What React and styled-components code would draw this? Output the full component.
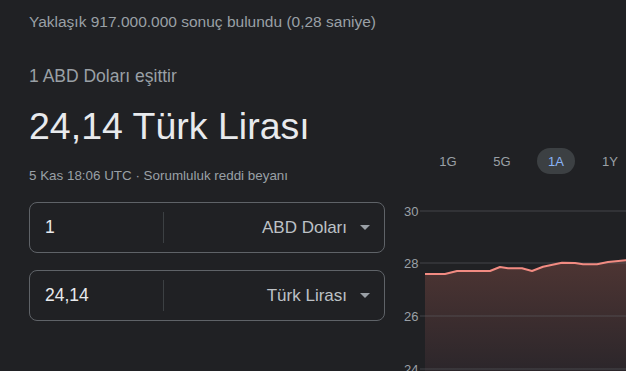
import React from "react";
import styled, { createGlobalStyle } from "styled-components";

const GlobalStyle = createGlobalStyle`
  html, body {
    margin: 0;
    padding: 0;
    background: #202124;
    overflow: hidden;
  }
  body {
    font-family: "Liberation Sans", Arial, sans-serif;
  }
`;

const Page = styled.div`
  width: 626px;
  height: 371px;
  padding-left: 29px;
  box-sizing: border-box;
  overflow: hidden;
`;

const Stats = styled.div`
  font-size: 15.5px;
  line-height: 20px;
  color: #9aa0a6;
  padding-top: 12px;
  white-space: nowrap;
`;

const Lead = styled.div`
  margin-top: 33px;
  font-size: 17.5px;
  line-height: 22px;
  color: #9aa0a6;
`;

const Headline = styled.div`
  margin-top: 17px;
  font-size: 37.5px;
  line-height: 44px;
  color: #e8eaed;
  white-space: nowrap;
`;

const Row = styled.div`
  display: flex;
`;

const LeftCol = styled.div`
  width: 356px;
  flex-shrink: 0;
`;

const Meta = styled.div`
  margin-top: 19px;
  font-size: 13.4px;
  line-height: 18px;
  color: #9aa0a6;
  white-space: nowrap;
`;

const Converter = styled.div`
  margin-top: 17px;
  display: flex;
  flex-direction: column;
  gap: 17px;
`;

const Field = styled.div`
  height: 51px;
  border: 1px solid #5f6368;
  border-radius: 8px;
  box-sizing: border-box;
  display: flex;
  align-items: center;
`;

const Amount = styled.div`
  width: 134px;
  padding-left: 15px;
  box-sizing: border-box;
  font-size: 17.5px;
  color: #e8eaed;
  align-self: stretch;
  display: flex;
  align-items: center;
  border-right: 1px solid #3c4043;
  margin: 9px 0;
`;

const Currency = styled.div`
  flex: 1;
  display: flex;
  align-items: center;
  justify-content: flex-end;
  gap: 13px;
  padding-right: 14px;
  font-size: 17px;
  color: #bdc1c6;
  white-space: nowrap;
`;

const Caret = styled.span`
  width: 0;
  height: 0;
  border-left: 5px solid transparent;
  border-right: 5px solid transparent;
  border-top: 5px solid #9aa0a6;
`;

const RightCol = styled.div`
  margin-left: 10px;
  flex-shrink: 0;
  width: 260px;
`;

const Tabs = styled.div`
  display: flex;
  gap: 16px;
  padding-left: 34px;
`;

const Tab = styled.div`
  width: 38px;
  height: 26px;
  border-radius: 13px;
  display: flex;
  align-items: center;
  justify-content: center;
  font-size: 13px;
  color: ${(p) => (p.active ? "#8ab4f8" : "#9aa0a6")};
  background: ${(p) => (p.active ? "#3c4043" : "transparent")};
`;

const Chart = styled.svg`
  display: block;
  margin-top: 26px;
`;

const points = [
  [30, 74], [50, 74], [62, 71], [95, 71], [105, 67], [113, 68.3],
  [127, 68.3], [137, 71], [148, 66.7], [167, 62.7], [180, 63],
  [188, 64.3], [202, 64.3], [213, 62], [231, 60.3], [260, 59],
];

const axis = [
  { label: "30", y: 11 },
  { label: "28", y: 63 },
  { label: "26", y: 116 },
  { label: "24", y: 169 },
];

function PriceChart() {
  const line = points.map(([x, y], i) => `${i ? "L" : "M"}${x} ${y}`).join(" ");
  const area = `${line} L260 180 L30 180 Z`;
  return (
    <Chart width="260" height="180" viewBox="0 0 260 180">
      <defs>
        <linearGradient id="fill" x1="0" y1="0" x2="0" y2="1">
          <stop offset="0" stopColor="#4e3533" />
          <stop offset="1" stopColor="#29252a" />
        </linearGradient>
      </defs>
      <path d={area} fill="url(#fill)" />
      {axis.map((a) => (
        <g key={a.label}>
          <line x1="25" x2="260" y1={a.y} y2={a.y} stroke="#5f6368" strokeOpacity="0.55" strokeWidth="1" />
          <text
            x="9"
            y={a.y + 4.5}
            fontSize="13"
            fill="#9aa0a6"
            fontFamily="Liberation Sans, Arial, sans-serif"
          >
            {a.label}
          </text>
        </g>
      ))}
      <path d={line} fill="none" stroke="#f28b82" strokeWidth="2" strokeLinejoin="round" />
    </Chart>
  );
}

export default function App() {
  return (
    <>
      <GlobalStyle />
      <Page>
        <Stats>Yaklaşık 917.000.000 sonuç bulundu (0,28 saniye)</Stats>
        <Lead>1 ABD Doları eşittir</Lead>
        <Headline>24,14 Türk Lirası</Headline>
        <Row>
          <LeftCol>
            <Meta>5 Kas 18:06 UTC · Sorumluluk reddi beyanı</Meta>
            <Converter>
              <Field>
                <Amount>1</Amount>
                <Currency>
                  ABD Doları
                  <Caret />
                </Currency>
              </Field>
              <Field>
                <Amount>24,14</Amount>
                <Currency>
                  Türk Lirası
                  <Caret />
                </Currency>
              </Field>
            </Converter>
          </LeftCol>
          <RightCol>
            <Tabs>
              <Tab>1G</Tab>
              <Tab>5G</Tab>
              <Tab active>1A</Tab>
              <Tab>1Y</Tab>
            </Tabs>
            <PriceChart />
          </RightCol>
        </Row>
      </Page>
    </>
  );
}
